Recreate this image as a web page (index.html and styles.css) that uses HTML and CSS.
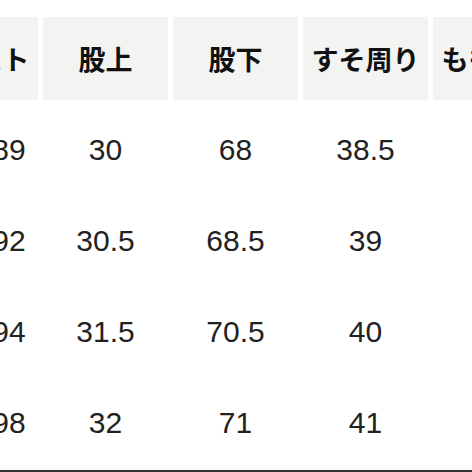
FILE: index.html
```html
<!DOCTYPE html>
<html lang="ja">
<head>
<meta charset="utf-8">
<link rel="stylesheet" href="styles.css">
</head>
<body>
<div class="page">
  <div class="table">
    <div class="head">ウエスト</div>
    <div class="head">股上</div>
    <div class="head">股下</div>
    <div class="head">すそ周り</div>
    <div class="head">もも周り</div>

    <div class="cell first">89</div>
    <div class="cell">30</div>
    <div class="cell">68</div>
    <div class="cell">38.5</div>
    <div class="cell"></div>

    <div class="cell first">92</div>
    <div class="cell">30.5</div>
    <div class="cell">68.5</div>
    <div class="cell">39</div>
    <div class="cell"></div>

    <div class="cell first">94</div>
    <div class="cell">31.5</div>
    <div class="cell">70.5</div>
    <div class="cell">40</div>
    <div class="cell"></div>

    <div class="cell first">98</div>
    <div class="cell">32</div>
    <div class="cell">71</div>
    <div class="cell">41</div>
    <div class="cell"></div>
  </div>
  <div class="bottom"></div>
</div>
</body>
</html>
```
FILE: styles.css
```css
html, body {
  margin: 0;
  padding: 0;
  background: #ffffff;
  overflow: hidden;
}
.page {
  width: 472px;
  height: 472px;
  overflow: hidden;
  display: flex;
  flex-direction: column;
}
.table {
  display: grid;
  grid-template-columns: repeat(5, 125px);
  grid-template-rows: 87px repeat(4, 91px);
  column-gap: 5px;
  margin-left: -87px;
  margin-top: 17px;
  flex: none;
}
.head {
  align-self: start;
  height: 83px;
  background: #f3f3f1;
  display: flex;
  align-items: center;
  justify-content: center;
  font-family: "Noto Sans CJK JP", sans-serif;
  font-weight: 700;
  font-size: 27px;
  color: #111111;
  white-space: nowrap;
  overflow: hidden;
}
.cell {
  display: flex;
  align-items: center;
  justify-content: center;
  font-family: "Liberation Sans", Arial, sans-serif;
  font-size: 30px;
  color: #222222;
  white-space: nowrap;
}
.cell.first {
  padding-left: 67px;
}
.bottom {
  margin-top: auto;
  height: 2px;
  background: #333333;
  box-shadow: 0 -3px 3px rgba(0,0,0,0.03);
}
```
